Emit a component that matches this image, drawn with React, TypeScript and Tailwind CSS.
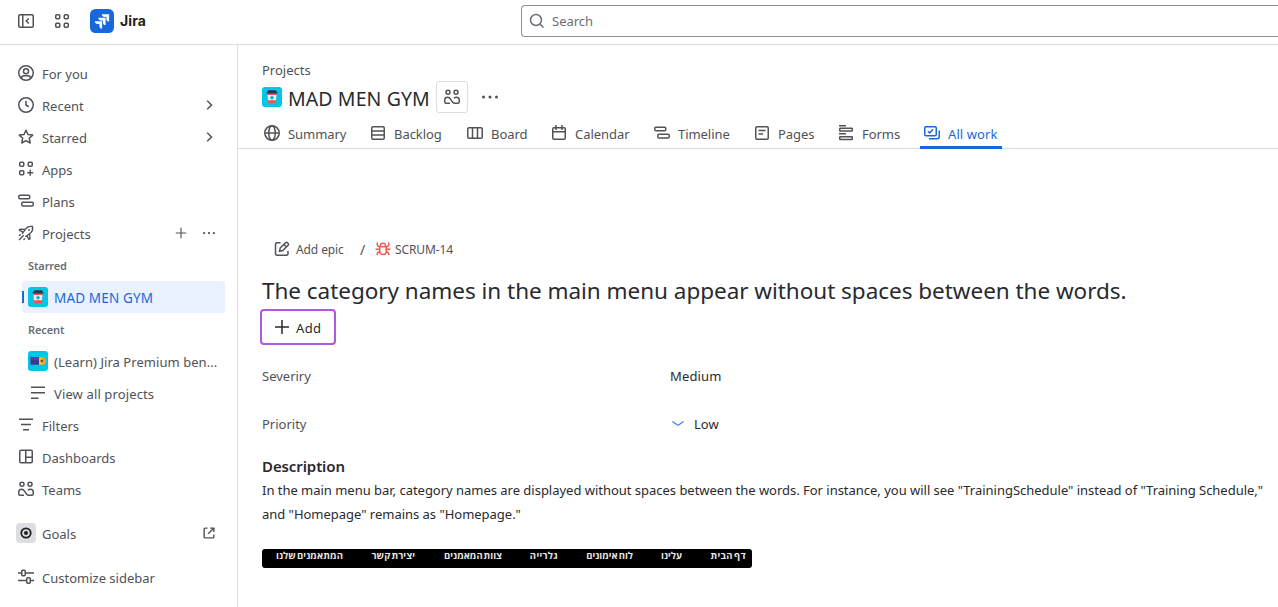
import React from "react";

type IconProps = { size?: string };

function Svg({ size = "h-4 w-4", children }: { size?: string; children: React.ReactNode }) {
  return (
    <svg viewBox="0 0 16 16" fill="none" stroke="currentColor" strokeWidth="1.5" className={`shrink-0 ${size}`}>
      {children}
    </svg>
  );
}

const CollapseIcon = () => (
  <Svg>
    <rect x="0.75" y="1.75" width="14.5" height="12.5" rx="1.25" />
    <path d="M4.75 2v12M10.75 5.5 8.25 8l2.5 2.5" />
  </Svg>
);
const SwitcherIcon = () => (
  <Svg>
    <rect x="1.75" y="1.75" width="4" height="4" rx="1" />
    <rect x="10.25" y="1.75" width="4" height="4" rx="1" />
    <rect x="1.75" y="10.25" width="4" height="4" rx="1" />
    <rect x="10.25" y="10.25" width="4" height="4" rx="1" />
  </Svg>
);
const PersonIcon = () => (
  <Svg>
    <circle cx="8" cy="8" r="7.25" />
    <circle cx="8" cy="6.25" r="2.5" />
    <path d="M3.25 13.25c.3-1.7 1.4-2.5 2.75-2.5h4c1.35 0 2.45.8 2.75 2.5" />
  </Svg>
);
const ClockIcon = () => (
  <Svg>
    <circle cx="8" cy="8" r="7.25" />
    <path d="M8 3.75V8l2.75 1.75" />
  </Svg>
);
const StarIcon = () => (
  <Svg>
    <path d="m8 1.2 2 4.300 4.700.6-3.400 3.200.9 4.700L8 11.700 3.800 14l.9-4.700L1.300 6.100l4.700-.6z" strokeLinejoin="round" />
  </Svg>
);
const AppsIcon = () => (
  <Svg>
    <rect x="1.75" y="1.25" width="4" height="4" rx="1" />
    <rect x="10.25" y="1.25" width="4" height="4" rx="1" />
    <rect x="1.75" y="9.75" width="4" height="4" rx="1" />
    <path d="M12.25 8.75v6M9.25 11.75h6" />
  </Svg>
);
const TimelineIcon = () => (
  <Svg>
    <rect x="0.75" y="2.25" width="11" height="3.5" rx="1.25" />
    <rect x="3.75" y="9.25" width="11.5" height="3.75" rx="1.25" />
  </Svg>
);
const RocketIcon = () => (
  <Svg>
    <g strokeWidth="1.35" strokeLinejoin="round">
      <path d="M5.2 7.3 8.3 3.2C9.8 1.5 12 1.1 14.5 1.5c.4 2.5 0 4.7-1.7 6.2L8.8 10.8" />
      <path d="M7 4.5 1.8 4.2 1.4 5.2l3.8 2.1-1 1.6M11.5 8.8l.5 5-1 .6-2.2-3.6-1.6 1" />
      <path d="M1 10.8 2.7 9.3M1 15l4.7-4.7M5.5 15l1.5-1.6" />
    </g>
    <circle cx="11" cy="5" r=".5" fill="currentColor" strokeWidth="1" />
  </Svg>
);
const PlusIcon = ({ size }: IconProps) => (
  <Svg size={size}>
    <path d="M8 1v14M1 8h14" />
  </Svg>
);
const MoreIcon = ({ size }: IconProps) => (
  <Svg size={size}>
    <g fill="currentColor" stroke="none">
      <circle cx="1.5" cy="8" r="1.5" />
      <circle cx="8" cy="8" r="1.5" />
      <circle cx="14.5" cy="8" r="1.5" />
    </g>
  </Svg>
);
const ChevronIcon = () => (
  <Svg>
    <path d="M6.2 3.7 10.5 8l-4.3 4.3" />
  </Svg>
);
const ListIcon = () => (
  <Svg>
    <path d="M1 2.25h14M1 7.75h14M1 13.25h7.5" />
  </Svg>
);
const FilterIcon = () => (
  <Svg>
    <path d="M1 2.25h14M3 7.5h10M5 12.75h6" />
  </Svg>
);
const DashboardIcon = () => (
  <Svg>
    <rect x="1.75" y="1.25" width="12.5" height="12.5" rx="1.25" />
    <path d="M7.75 1.5v12M8 8.25h6" />
  </Svg>
);
const TeamsIcon = () => (
  <Svg>
    <circle cx="4" cy="3.25" r="2" />
    <circle cx="12" cy="3.25" r="2" />
    <path d="M6 14.25H2c-.75 0-1.25-.5-1.25-1.25v-2c0-1.6 1.2-2.75 2.85-2.75 1.4 0 2.3.8 2.9 1.9l1.5 2.3c.7 1.2 1.4 1.8 2.7 1.8H14c.75 0 1.25-.5 1.25-1.25v-2c0-1.6-1.2-2.75-2.85-2.75-1.1 0-1.9.4-2.5 1.15" />
  </Svg>
);
const ExternalIcon = () => (
  <Svg size="h-3 w-3">
    <path
      d="M6 1.5H3c-.8 0-1.5.7-1.5 1.5v10c0 .8.7 1.5 1.5 1.5h10c.8 0 1.5-.7 1.5-1.5v-3M9.5 1.5h5v5M14.2 1.800 7 9"
      strokeWidth="1.9"
    />
  </Svg>
);
const CustomizeIcon = () => (
  <Svg>
    <path d="M0 4h3.5M7.5 4H16M0 11.5h8.5M12.5 11.5H16" />
    <rect x="3.75" y="1.25" width="3.5" height="5.5" rx="1" />
    <rect x="8.75" y="8.75" width="3.5" height="5.5" rx="1" />
  </Svg>
);
const GlobeIcon = () => (
  <Svg>
    <circle cx="8" cy="8" r="7.25" />
    <ellipse cx="8" cy="8" rx="3.25" ry="7.25" />
    <path d="M1 8h14" />
  </Svg>
);
const BacklogIcon = () => (
  <Svg>
    <rect x="1.75" y="1.75" width="12.5" height="12.5" rx="1.25" />
    <path d="M2 6h12M2 10h12" />
  </Svg>
);
const BoardIcon = () => (
  <Svg>
    <rect x="0.75" y="2.75" width="14.5" height="10.5" rx="1.25" />
    <path d="M5.5 3v10M10.5 3v10" />
  </Svg>
);
const CalendarIcon = () => (
  <Svg>
    <rect x="1.75" y="2.75" width="12.5" height="11.5" rx="1.25" />
    <path d="M2 6.75h12M5 0v5M11 0v5" />
  </Svg>
);
const PageIcon = () => (
  <Svg>
    <rect x="1.75" y="1.75" width="12.5" height="12.5" rx="1.25" />
    <path d="M4.5 5.5h7M4.5 9h4.5" />
  </Svg>
);
const FormsIcon = () => (
  <Svg>
    <path d="M1 .75h7M1 8.75h7" />
    <rect x="1.75" y="3.25" width="12.5" height="2.8" rx=".5" />
    <rect x="1.75" y="11.75" width="12.5" height="2.8" rx=".5" />
  </Svg>
);
const AllWorkIcon = () => (
  <Svg>
    <rect x="0.75" y="1.75" width="11.5" height="9" rx="1.25" />
    <path d="m4 6.2 1.700 1.700L9 4.300M15.250 5.500v6c0 1.300-.9 2.250-2.250 2.250H5" />
  </Svg>
);
const EditIcon = () => (
  <Svg>
    <path d="M6.5 1.75H3c-.9 0-1.5.6-1.5 1.5v9.5c0 .9.6 1.5 1.5 1.5h9.5c.9 0 1.5-.6 1.5-1.5V10" />
    <path d="m6.2 7 5.3-5.3c.6-.6 1.2-.6 1.8 0l.8.8c.6.6.6 1.2 0 1.8L8.8 9.6l-3.3.7zM10 3.5l2.500 2.500" />
  </Svg>
);
const BugIcon = () => (
  <Svg size="h-4 w-4 text-[#f15b50]">
    <path d="M4.75 5.75h6.5v4.5a3.25 3.25 0 0 1-6.5 0zM5.5 5.5V4.25C5.5 3 6.6 2.25 8 2.25s2.5.75 2.5 2V5.5M2.25 1.5v2.25c0 1 .7 1.75 2.5 2.25M13.75 1.5v2.25c0 1-.7 1.75-2.5 2.25M.5 8.25h4.25M11.25 8.25h4.25M2.25 14v-1.25c0-1 .8-1.75 2.5-2.25M13.75 14v-1.25c0-1-.8-1.75-2.5-2.25" />
  </Svg>
);

function CupAvatar() {
  return (
    <svg viewBox="0 0 20 20" className="h-5 w-5 shrink-0">
      <rect width="20" height="20" rx="3" fill="#00c7e5" />
      <path d="M5.4 6h9.2l-.9 10.2H6.3z" fill="#ff5147" />
      <path d="M5.6 8h8.8l-.4 5.200H6z" fill="#e9f3f6" />
      <circle cx="10" cy="10.7" r="1.800" fill="#00b8d9" />
      <path d="M6.200 3.200h7.600L15.300 5.500v1H4.700v-1z" fill="#253858" />
    </svg>
  );
}
function TorchAvatar() {
  return (
    <svg viewBox="0 0 20 20" className="h-5 w-5 shrink-0">
      <rect width="20" height="20" rx="3" fill="#00c7e5" />
      <path d="M2.500 6.200H11v7.500H2.500z" fill="#403294" />
      <path d="M2.500 6.200H11v3H2.500z" fill="#5243aa" />
      <path d="M11 6.200h3a3.750 3.750 0 0 1 0 7.500H11z" fill="#ffc400" />
      <path d="M14 6.200a3.750 3.750 0 0 1 0 7.500z" fill="#ff991f" />
      <circle cx="13.800" cy="9.900" r="1.200" fill="#5e3a72" />
    </svg>
  );
}

function NavItem({ icon, label, end }: { icon: React.ReactNode; label: string; end?: React.ReactNode }) {
  return (
    <div className="flex h-8 items-center pr-2 pl-1.5">
      {icon}
      <span className="ml-2 flex-1 pt-0.5 whitespace-nowrap">{label}</span>
      {end}
    </div>
  );
}

function Sidebar() {
  return (
    <nav className="flex w-[238px] shrink-0 flex-col border-r border-[#dddee1] pt-3 pr-3 pl-3 text-[#505258]">
      <NavItem icon={<PersonIcon />} label="For you" />
      <NavItem icon={<ClockIcon />} label="Recent" end={<ChevronIcon />} />
      <NavItem icon={<StarIcon />} label="Starred" end={<ChevronIcon />} />
      <NavItem icon={<AppsIcon />} label="Apps" />
      <NavItem icon={<TimelineIcon />} label="Plans" />
      <NavItem
        icon={<RocketIcon />}
        label="Projects"
        end={
          <div className="flex items-center gap-4 pr-0.5">
            <PlusIcon size="h-3 w-3" />
            <MoreIcon size="h-3 w-3" />
          </div>
        }
      />
      <div className="flex h-8 items-center pt-px pl-4 text-[11px] font-semibold tracking-[-0.1px] text-[#6b6e76]">Starred</div>
      <div className="ml-[10px] flex h-8 items-center rounded-[3px] bg-[#e9f2fe] text-[#1868db]">
        <span className="h-3 w-0.5 bg-[#1868db]" />
        <span className="ml-1">
          <CupAvatar />
        </span>
        <span className="ml-1.5 pt-0.5 text-[13.5px] tracking-[0.15px]">MAD MEN GYM</span>
      </div>
      <div className="flex h-8 items-center pt-px pl-4 text-[11px] font-semibold tracking-[-0.1px] text-[#6b6e76]">Recent</div>
      <div className="flex h-8 items-center pl-4">
        <TorchAvatar />
        <span className="ml-1.5 pt-0.5 tracking-[0.05px] whitespace-nowrap">(Learn) Jira Premium ben...</span>
      </div>
      <div className="flex h-8 items-center pl-[18px]">
        <ListIcon />
        <span className="ml-2 pt-0.5 tracking-[0.13px]">View all projects</span>
      </div>
      <NavItem icon={<FilterIcon />} label="Filters" />
      <NavItem icon={<DashboardIcon />} label="Dashboards" />
      <NavItem icon={<TeamsIcon />} label="Teams" />
      <div className="mt-3 flex h-8 items-center pr-[10px] pl-1">
        <span className="flex h-5 w-5 items-center justify-center rounded bg-[#dddee1]">
          <svg viewBox="0 0 12 12" className="h-3 w-3 text-[#1e1f21]">
            <circle cx="6" cy="6" r="4.7" fill="none" stroke="currentColor" strokeWidth="1.8" />
            <circle cx="6" cy="6" r="2" fill="currentColor" />
          </svg>
        </span>
        <span className="ml-1.5 flex-1 pt-0.5">Goals</span>
        <ExternalIcon />
      </div>
      <div className="mt-3">
        <NavItem icon={<CustomizeIcon />} label="Customize sidebar" />
      </div>
    </nav>
  );
}

function Header() {
  return (
    <header className="flex h-[45px] shrink-0 items-start border-b border-[#dddee1] pl-[18px] text-[#505258]">
      <div className="flex h-[42px] w-[503px] shrink-0 items-center">
        <CollapseIcon />
        <span className="ml-5">
          <SwitcherIcon />
        </span>
        <svg viewBox="0 0 24 24" className="ml-5 h-6 w-6">
          <rect width="24" height="24" rx="5.5" fill="#1868db" />
          <g fill="#fff">
            <path d="M11.8 5.300h7.300v7.300c-1.600 0-2.700-1.200-2.700-2.700V8.100h-1.700c-1.700 0-2.900-1.200-2.900-2.800z" />
            <path d="M8.300 8.800h7.300v7.300c-1.600 0-2.700-1.200-2.700-2.700v-1.800h-1.700c-1.700 0-2.900-1.200-2.900-2.800z" />
            <path d="M4.800 12.300h7.300v7.300c-1.600 0-2.700-1.200-2.700-2.700v-1.800H7.700c-1.700 0-2.900-1.200-2.900-2.800z" />
          </g>
        </svg>
        <span className="ml-1.5 font-['Inter',sans-serif] text-[14px] font-bold tracking-[0.1px] text-[#1e1f21]">Jira</span>
      </div>
      <div className="mt-[5px] flex h-8 flex-1 items-center rounded-l border border-r-0 border-[#8c8f97] pl-[7px] text-[#6b6e76]">
        <Svg>
          <circle cx="7" cy="7" r="5.5" />
          <path d="m11 11 3.500 3.500" />
        </Svg>
        <span className="ml-[7px]">Search</span>
      </div>
    </header>
  );
}

const tabs = [
  { label: "Summary", icon: <GlobeIcon />, box: "w-[106px]" },
  { label: "Backlog", icon: <BacklogIcon />, box: "w-[97px]" },
  { label: "Board", icon: <BoardIcon />, box: "w-[84px]" },
  { label: "Calendar", icon: <CalendarIcon />, box: "w-[103px]" },
  { label: "Timeline", icon: <TimelineIcon />, box: "w-[100px]" },
  { label: "Pages", icon: <PageIcon />, box: "w-[84px]" },
  { label: "Forms", icon: <FormsIcon />, box: "w-[86px]" },
];

function ProjectHeader() {
  return (
    <div className="flex h-[104px] shrink-0 flex-col border-b border-[#dddee1] pl-6 text-[#505258]">
      <div className="mt-[15px] h-[21px] leading-5">Projects</div>
      <div className="flex h-8 items-center">
        <CupAvatar />
        <span className="ml-1.5 w-[148px] pt-1 text-[19.5px] tracking-[0.1px] whitespace-nowrap text-[#292a2e]">MAD MEN GYM</span>
        <span className="flex h-8 w-8 items-center justify-center rounded-[3px] border border-[#dddee1]">
          <TeamsIcon />
        </span>
        <span className="ml-[14px]">
          <MoreIcon />
        </span>
      </div>
      <div className="-mb-px -ml-0.5 flex h-9 items-stretch pt-1">
        {tabs.map((t) => (
          <div key={t.label} className={`flex items-center pt-px pb-px pl-1 ${t.box}`}>
            {t.icon}
            <span className="ml-2 pt-0.5 tracking-[-0.05px]">{t.label}</span>
          </div>
        ))}
        <div className="flex w-[82px] items-center border-b-[3px] border-[#1868db] pt-[3px] pl-1 whitespace-nowrap text-[#1868db]">
          <AllWorkIcon />
          <span className="ml-2 pt-0.5 tracking-[0.1px]">All work</span>
        </div>
      </div>
    </div>
  );
}

const menu = [
  { label: "דף הבית", box: "w-[64px] tracking-[0.3px]" },
  { label: "עלינו", box: "w-[49px]" },
  { label: "לוח אימונים", box: "w-[75px]" },
  { label: "גלרייה", box: "w-[56px] tracking-[0.3px]" },
  { label: "צוות המאמנים", box: "w-[87px]" },
  { label: "יצירת קשר", box: "w-[72px] tracking-[0.1px]" },
  { label: "המתאמנים שלנו", box: "w-[80px] tracking-[0.1px]" },
];

function Issue() {
  return (
    <section className="flex flex-col pl-6 text-[#292a2e]">
      <div className="mt-[90px] flex h-5 items-center pl-3 text-[12px] text-[#505258]">
        <EditIcon />
        <span className="ml-1.5 w-[64px] pt-0.5 tracking-[-0.1px] whitespace-nowrap">Add epic</span>
        <span className="w-[15px] pt-0.5 text-[14px]">/</span>
        <BugIcon />
        <span className="ml-1 pt-0.5 tracking-[-0.1px] whitespace-nowrap">SCRUM-14</span>
      </div>
      <h1 className="mt-[17px] h-[35px] text-[22.5px] leading-[30px] tracking-[-0.03px] whitespace-nowrap">
        The category names in the main menu appear without spaces between the words.
      </h1>
      <div className="-mt-0.5 -ml-0.5 flex h-9 w-[76px] items-center rounded border-2 border-[#af59e1] pl-3">
        <PlusIcon />
        <span className="ml-1.5 pt-px tracking-[0.4px]">Add</span>
      </div>
      <div className="mt-[15px] flex h-8 items-center">
        <span className="w-[408px] text-[#505258]">Severiry</span>
        <span className="tracking-[0.15px]">Medium</span>
      </div>
      <div className="mt-4 flex h-8 items-center">
        <span className="w-[408px] text-[#505258]">Priority</span>
        <Svg size="h-4 w-4 text-[#4688ec]">
          <path d="m2.500 5.500 4.200 3c.9.600 1.700.600 2.600 0l4.200-3" />
        </Svg>
        <span className="ml-2">Low</span>
      </div>
      <h2 className="mt-[14px] h-6 text-[15px] leading-6 font-semibold tracking-[-0.1px]">Description</h2>
      <p className="text-[13px] leading-6 tracking-[-0.02px] whitespace-nowrap">
        In the main menu bar, category names are displayed without spaces between the words. For instance, you will see "TrainingSchedule" instead of "Training Schedule,"
        <br />
        and "Homepage" remains as "Homepage."
      </p>
      <div
        dir="rtl"
        className="mt-[23px] flex h-[19px] w-[490px] rounded-[3px] bg-black pr-[6px] font-['Open_Sans',sans-serif] text-[9.5px] leading-[13px] font-bold whitespace-nowrap text-[#e8e8e8]"
      >
        {menu.map((m) => (
          <span key={m.label} className={`shrink-0 [word-spacing:-1.5px] ${m.box}`}>
            {m.label}
          </span>
        ))}
      </div>
    </section>
  );
}

export default function App() {
  return (
    <div className="flex h-[607px] w-full flex-col overflow-hidden bg-white font-['Noto_Sans',sans-serif] text-[13px] leading-5">
      <Header />
      <div className="flex min-h-0 flex-1">
        <Sidebar />
        <main className="flex min-w-0 flex-1 flex-col">
          <ProjectHeader />
          <Issue />
        </main>
      </div>
    </div>
  );
}
